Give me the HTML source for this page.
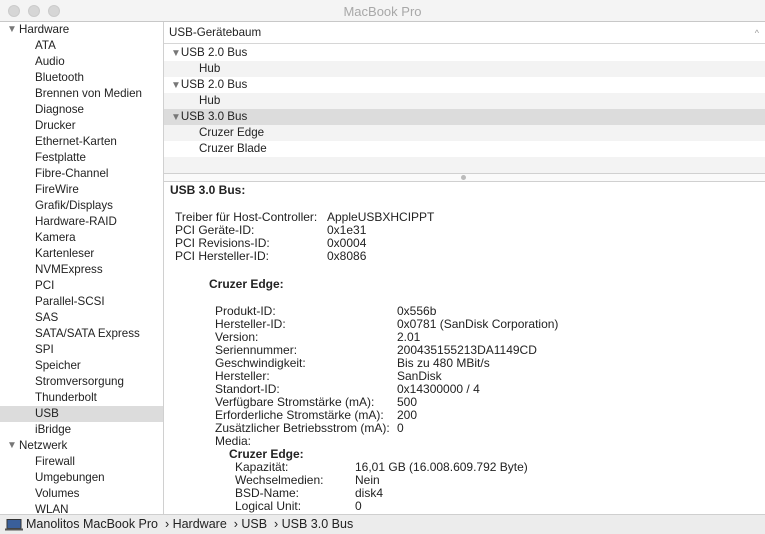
<!DOCTYPE html>
<html><head><meta charset="utf-8"><style>
*{margin:0;padding:0;box-sizing:border-box}
body{width:765px;height:534px;overflow:hidden;background:#fff;font-family:"Liberation Sans",sans-serif;font-size:12px;color:#222;position:relative}
.a{position:absolute;white-space:nowrap;line-height:13px;font-size:12px;top:1px}
#title{position:absolute;left:0;top:0;width:765px;height:22px;background:#f4f4f4;border-bottom:1px solid #c8c8c8}
#title .t{position:absolute;left:0;right:0;top:4px;text-align:center;font-size:13px;color:#a8a8a8}
.dot{position:absolute;top:5px;width:12px;height:12px;border-radius:50%;background:#d6d6d6;border:1px solid #cbcbcb}
#side{position:absolute;left:0;top:22px;width:164px;height:492px;background:#fff;border-right:1px solid #d0d0d0}
.sr{position:absolute;left:0;width:163px;height:16px;line-height:16px;padding-left:35px;font-size:11.6px;color:#222}
.sr.h{padding-left:19px}
.tri{position:absolute;font-size:10px;color:#777}
.rr{position:absolute;left:164px;width:601px;height:16px;line-height:16px;font-size:11.6px}
#status{position:absolute;left:0;top:514px;width:765px;height:20px;background:#ececec;border-top:1px solid #cfcfcf;font-size:12.5px;line-height:19px;padding-left:26px;color:#222}
b{font-weight:bold}
</style></head><body>
<div id="title"><div class="dot" style="left:8px"></div><div class="dot" style="left:28px"></div><div class="dot" style="left:48px"></div><div class="t">MacBook Pro</div></div>

<div id="side">
<div class="sr h" style="top:0">Hardware</div><span class="tri" style="left:7px;top:2px">▼</span>
<div class="sr" style="top:16px">ATA</div>
<div class="sr" style="top:32px">Audio</div>
<div class="sr" style="top:48px">Bluetooth</div>
<div class="sr" style="top:64px">Brennen von Medien</div>
<div class="sr" style="top:80px">Diagnose</div>
<div class="sr" style="top:96px">Drucker</div>
<div class="sr" style="top:112px">Ethernet-Karten</div>
<div class="sr" style="top:128px">Festplatte</div>
<div class="sr" style="top:144px">Fibre-Channel</div>
<div class="sr" style="top:160px">FireWire</div>
<div class="sr" style="top:176px">Grafik/Displays</div>
<div class="sr" style="top:192px">Hardware-RAID</div>
<div class="sr" style="top:208px">Kamera</div>
<div class="sr" style="top:224px">Kartenleser</div>
<div class="sr" style="top:240px">NVMExpress</div>
<div class="sr" style="top:256px">PCI</div>
<div class="sr" style="top:272px">Parallel-SCSI</div>
<div class="sr" style="top:288px">SAS</div>
<div class="sr" style="top:304px">SATA/SATA Express</div>
<div class="sr" style="top:320px">SPI</div>
<div class="sr" style="top:336px">Speicher</div>
<div class="sr" style="top:352px">Stromversorgung</div>
<div class="sr" style="top:368px">Thunderbolt</div>
<div class="sr" style="top:384px;background:#dcdcdc">USB</div>
<div class="sr" style="top:400px">iBridge</div>
<div class="sr h" style="top:416px">Netzwerk</div><span class="tri" style="left:7px;top:418px">▼</span>
<div class="sr" style="top:432px">Firewall</div>
<div class="sr" style="top:448px">Umgebungen</div>
<div class="sr" style="top:464px">Volumes</div>
<div class="sr" style="top:480px">WLAN</div>
</div>

<div class="rr" style="top:22px;height:22px;line-height:22px;padding-left:5px;border-bottom:1px solid #d6d6d6">USB-Gerätebaum<span style="position:absolute;right:6px;top:0;color:#999;font-size:9px">^</span></div>
<div class="rr" style="top:45px;padding-left:7px"><span style="font-size:10px;color:#777">▼</span>USB 2.0 Bus</div>
<div class="rr" style="top:61px;background:#f3f3f3;padding-left:35px">Hub</div>
<div class="rr" style="top:77px;padding-left:7px"><span style="font-size:10px;color:#777">▼</span>USB 2.0 Bus</div>
<div class="rr" style="top:93px;background:#f3f3f3;padding-left:35px">Hub</div>
<div class="rr" style="top:109px;background:#dcdcdc;padding-left:7px"><span style="font-size:10px;color:#777">▼</span>USB 3.0 Bus</div>
<div class="rr" style="top:125px;background:#f3f3f3;padding-left:35px">Cruzer Edge</div>
<div class="rr" style="top:141px;padding-left:35px">Cruzer Blade</div>
<div class="rr" style="top:157px;background:#f3f3f3"></div>
<div class="rr" style="top:173px;height:9px;border-top:1px solid #d0d0d0;border-bottom:1px solid #d0d0d0;background:#fafafa"></div>
<div style="position:absolute;left:461px;top:175px;width:5px;height:5px;border-radius:50%;background:#bbb"></div>

<div style="position:absolute;left:0;top:1px;width:765px;height:0">
<div class="a" style="left:170px;top:183px"><b>USB 3.0 Bus:</b></div>
<div class="a" style="left:175px;top:210px">Treiber für Host-Controller:</div><div class="a" style="left:327px;top:210px">AppleUSBXHCIPPT</div>
<div class="a" style="left:175px;top:223px">PCI Geräte-ID:</div><div class="a" style="left:327px;top:223px">0x1e31</div>
<div class="a" style="left:175px;top:236px">PCI Revisions-ID:</div><div class="a" style="left:327px;top:236px">0x0004</div>
<div class="a" style="left:175px;top:249px">PCI Hersteller-ID:</div><div class="a" style="left:327px;top:249px">0x8086</div>
<div class="a" style="left:209px;top:277px"><b>Cruzer Edge:</b></div>
<div class="a" style="left:215px;top:304px">Produkt-ID:</div><div class="a" style="left:397px;top:304px">0x556b</div>
<div class="a" style="left:215px;top:317px">Hersteller-ID:</div><div class="a" style="left:397px;top:317px">0x0781  (SanDisk Corporation)</div>
<div class="a" style="left:215px;top:330px">Version:</div><div class="a" style="left:397px;top:330px">2.01</div>
<div class="a" style="left:215px;top:343px">Seriennummer:</div><div class="a" style="left:397px;top:343px">200435155213DA1149CD</div>
<div class="a" style="left:215px;top:356px">Geschwindigkeit:</div><div class="a" style="left:397px;top:356px">Bis zu 480 MBit/s</div>
<div class="a" style="left:215px;top:369px">Hersteller:</div><div class="a" style="left:397px;top:369px">SanDisk</div>
<div class="a" style="left:215px;top:382px">Standort-ID:</div><div class="a" style="left:397px;top:382px">0x14300000 / 4</div>
<div class="a" style="left:215px;top:395px">Verfügbare Stromstärke (mA):</div><div class="a" style="left:397px;top:395px">500</div>
<div class="a" style="left:215px;top:408px">Erforderliche Stromstärke (mA):</div><div class="a" style="left:397px;top:408px">200</div>
<div class="a" style="left:215px;top:421px">Zusätzlicher Betriebsstrom (mA):</div><div class="a" style="left:397px;top:421px">0</div>
<div class="a" style="left:215px;top:434px">Media:</div>
<div class="a" style="left:229px;top:447px"><b>Cruzer Edge:</b></div>
<div class="a" style="left:235px;top:460px">Kapazität:</div><div class="a" style="left:355px;top:460px">16,01 GB (16.008.609.792 Byte)</div>
<div class="a" style="left:235px;top:473px">Wechselmedien:</div><div class="a" style="left:355px;top:473px">Nein</div>
<div class="a" style="left:235px;top:486px">BSD-Name:</div><div class="a" style="left:355px;top:486px">disk4</div>
<div class="a" style="left:235px;top:499px">Logical Unit:</div><div class="a" style="left:355px;top:499px">0</div>
</div>

<div id="status">
<svg style="position:absolute;left:5px;top:4px" width="18" height="12" viewBox="0 0 18 12"><rect x="2" y="0.5" width="14" height="9" fill="#3a5f9a" stroke="#333" stroke-width="1"/><rect x="0" y="9.5" width="18" height="2" fill="#555"/></svg>
Manolitos MacBook Pro &nbsp;› Hardware &nbsp;› USB &nbsp;› USB 3.0 Bus</div>
</body></html>
